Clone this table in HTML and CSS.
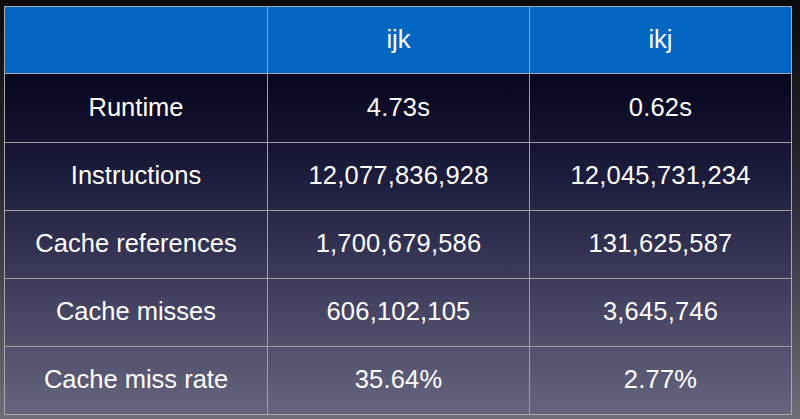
FILE: index.html
```html
<!DOCTYPE html>
<html>
<head>
<meta charset="utf-8">
<link rel="stylesheet" href="styles.css">
</head>
<body>
<div class="slide">
  <div class="table">
    <div class="row head">
      <div class="cell"></div>
      <div class="cell">ijk</div>
      <div class="cell">ikj</div>
    </div>
    <div class="body">
      <div class="row">
        <div class="cell">Runtime</div>
        <div class="cell num">4.73s</div>
        <div class="cell num">0.62s</div>
      </div>
      <div class="row">
        <div class="cell">Instructions</div>
        <div class="cell num">12,077,836,928</div>
        <div class="cell num">12,045,731,234</div>
      </div>
      <div class="row">
        <div class="cell">Cache references</div>
        <div class="cell num">1,700,679,586</div>
        <div class="cell num">131,625,587</div>
      </div>
      <div class="row">
        <div class="cell">Cache misses</div>
        <div class="cell num">606,102,105</div>
        <div class="cell num">3,645,746</div>
      </div>
      <div class="row">
        <div class="cell">Cache miss rate</div>
        <div class="cell num">35.64%</div>
        <div class="cell num">2.77%</div>
      </div>
    </div>
  </div>
</div>
</body>
</html>
```
FILE: styles.css
```css
html, body {
  margin: 0;
  padding: 0;
}
body {
  width: 800px;
  height: 419px;
  overflow: hidden;
  background: linear-gradient(to bottom, #0a0a0a 0%, #2a2a36 45%, #6e6e78 100%);
  font-family: "Helvetica Neue", Helvetica, "Liberation Sans", Arial, sans-serif;
  color: #ffffff;
}
.slide {
  padding: 6px 0 0 4px;
}
.table {
  width: 788px;
  box-sizing: border-box;
  border: 1px solid #a8a8a8;
}
.row {
  display: grid;
  grid-template-columns: 262px 262px 1fr;
  height: 68px;
  border-top: 1px solid #a0a0a0;
  box-sizing: border-box;
}
.row.head {
  height: 67px;
  border-top: none;
  background: #0366c2;
  border-bottom: 1px solid #a8a8b0;
}
.body .row:first-child {
  border-top: none;
}
.body {
  background: linear-gradient(to bottom, #07061e 0%, #1c1c3c 30%, #3c3b5c 60%, #66657e 100%);
}
.cell {
  display: flex;
  align-items: center;
  justify-content: center;
  font-size: 25.5px;
  line-height: 1;
  border-left: 1px solid #a0a0a0;
  padding-bottom: 1px;
}
.cell:first-child {
  border-left: none;
}
.num {
  letter-spacing: 0.2px;
}
```
